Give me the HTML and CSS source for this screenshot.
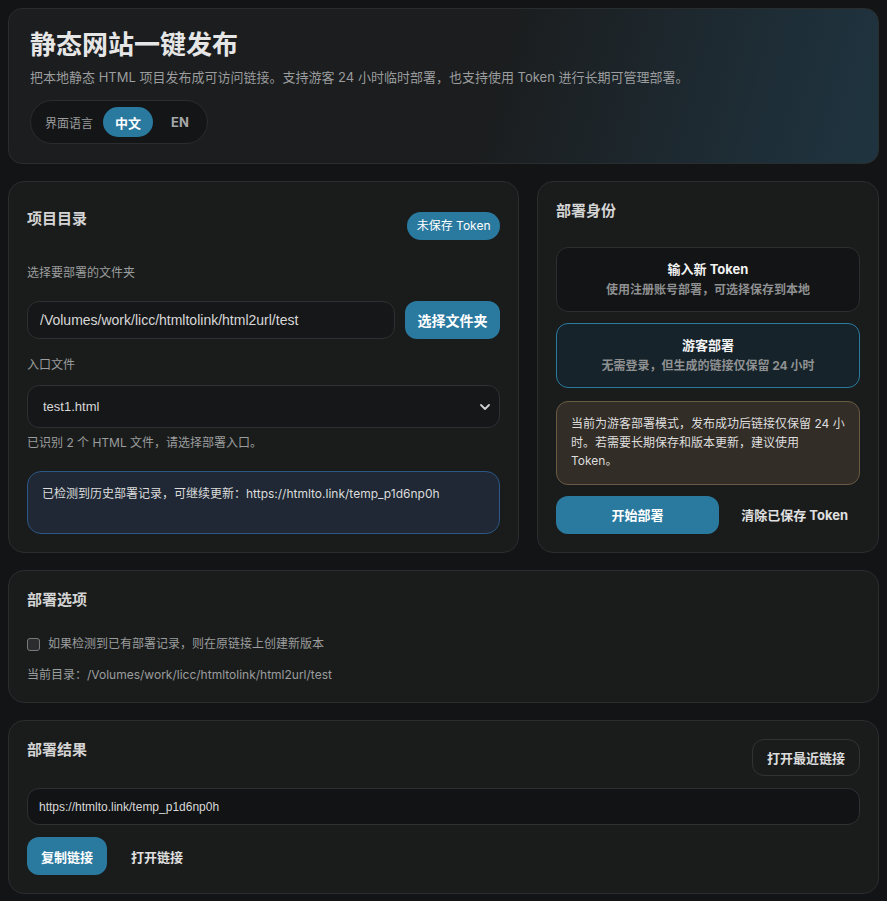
FILE: index.html
```html
<!DOCTYPE html>
<html lang="zh-CN">
<head>
    <meta charset="UTF-8">
    <meta name="viewport" content="width=device-width, initial-scale=1.0">
    <title>静态网站一键发布</title>
    <link rel="stylesheet" href="styles.css">
</head>
<body>
    <div class="page">
        <header class="hero">
            <h1>静态网站一键发布</h1>
            <p class="hero-sub">把本地静态 HTML 项目发布成可访问链接。支持游客 24 小时临时部署，也支持使用 Token 进行长期可管理部署。</p>
            <div class="lang-switch">
                <span class="lang-label">界面语言</span>
                <button class="lang-btn active">中文</button>
                <button class="lang-btn">EN</button>
            </div>
        </header>

        <div class="main-grid">
            <section class="card">
                <div class="card-head dir-head">
                    <h2>项目目录</h2>
                    <span class="badge">未保存 Token</span>
                </div>
                <label class="field-label first">选择要部署的文件夹</label>
                <div class="path-row">
                    <input class="text-input" type="text" value="/Volumes/work/licc/htmltolink/html2url/test">
                    <button class="btn primary">选择文件夹</button>
                </div>
                <label class="field-label">入口文件</label>
                <select class="select-input">
                    <option>test1.html</option>
                    <option>test2.html</option>
                </select>
                <p class="hint">已识别 2 个 HTML 文件，请选择部署入口。</p>
                <div class="info-box">已检测到历史部署记录，可继续更新：https://htmlto.link/temp_p1d6np0h</div>
            </section>

            <section class="card">
                <div class="card-head">
                    <h2>部署身份</h2>
                </div>
                <div class="mode-list">
                    <div class="mode-option">
                        <div class="mode-title">输入新 Token</div>
                        <div class="mode-desc">使用注册账号部署，可选择保存到本地</div>
                    </div>
                    <div class="mode-option selected">
                        <div class="mode-title">游客部署</div>
                        <div class="mode-desc">无需登录，但生成的链接仅保留 24 小时</div>
                    </div>
                </div>
                <div class="warn-box">当前为游客部署模式，发布成功后链接仅保留 24 小时。若需要长期保存和版本更新，建议使用 Token。</div>
                <div class="action-row">
                    <button class="btn primary grow">开始部署</button>
                    <button class="btn ghost">清除已保存 Token</button>
                </div>
            </section>
        </div>

        <section class="card">
            <div class="card-head">
                <h2>部署选项</h2>
            </div>
            <label class="check-row">
                <input type="checkbox" class="check">
                <span>如果检测到已有部署记录，则在原链接上创建新版本</span>
            </label>
            <p class="current-dir">当前目录：/Volumes/work/licc/htmltolink/html2url/test</p>
        </section>

        <section class="card">
            <div class="card-head">
                <h2>部署结果</h2>
                <button class="btn outline">打开最近链接</button>
            </div>
            <input class="text-input result-input" type="text" value="https://htmlto.link/temp_p1d6np0h" readonly>
            <div class="result-actions">
                <button class="btn primary small">复制链接</button>
                <button class="btn ghost small">打开链接</button>
            </div>
        </section>
    </div>
</body>
</html>
```

FILE: styles.css
```css
* {
    margin: 0;
    padding: 0;
    box-sizing: border-box;
}

:root {
    --bg: #121415;
    --card: #1a1c1c;
    --border: #2a2d2e;
    --blue: #2a7aa0;
    --text: #e4e4e4;
    --muted: #9a9c9d;
    --ui-font: Inter, "Noto Sans CJK SC", sans-serif;
    --field-font: "Liberation Sans", "Noto Sans CJK SC", sans-serif;
}

body {
    background: var(--bg);
    color: var(--text);
    font-family: var(--ui-font);
    padding: 8px;
}

.page {
    display: flex;
    flex-direction: column;
    gap: 17px;
}

button {
    font-family: var(--ui-font);
    cursor: pointer;
}

/* header */
.hero {
    border: 1px solid var(--border);
    border-radius: 14px;
    padding: 20px 21px 19px;
    background: linear-gradient(105deg, #1b1d1e 0%, #1b1d1e 55%, #1e2d36 85%, #1f3440 100%);
}

.hero h1 {
    font-size: 26px;
    line-height: 32px;
    font-weight: 700;
    color: #e6e6e6;
    margin-bottom: 6px;
}

.hero-sub {
    font-size: 13px;
    line-height: 20px;
    color: var(--muted);
    margin-bottom: 13px;
}

.lang-switch {
    display: inline-flex;
    align-items: center;
    gap: 6px;
    padding: 6px 6px 6px 14px;
    background: #141516;
    border: 1px solid #2a2c2d;
    border-radius: 22px;
}

.lang-label {
    font-size: 12px;
    color: var(--muted);
    margin-right: 4px;
}

.lang-btn {
    height: 30px;
    padding: 0 12px;
    border: none;
    border-radius: 15px;
    background: transparent;
    color: #a5a7a8;
    font-size: 13px;
    font-weight: 700;
}

.lang-btn.active {
    background: var(--blue);
    color: #fff;
}

/* cards */
.main-grid {
    display: grid;
    grid-template-columns: 511px 1fr;
    gap: 18px;
}

.card {
    background: var(--card);
    border: 1px solid var(--border);
    border-radius: 16px;
    padding: 18px;
}

.card-head {
    display: flex;
    justify-content: space-between;
    align-items: flex-start;
}

.card-head h2 {
    font-size: 15px;
    line-height: 22px;
    font-weight: 700;
    color: #d4d4d4;
}

.dir-head {
    padding-top: 8px;
}

.badge {
    margin-top: 4px;
    height: 28px;
    line-height: 28px;
    padding: 0 9.5px;
    border-radius: 14px;
    background: var(--blue);
    color: #fff;
    font-size: 12px;
}

.field-label {
    display: block;
    font-size: 12px;
    line-height: 18px;
    color: var(--muted);
    margin: 17px 0 11px;
}

.field-label.first {
    margin: 24px 0 19px;
}

.path-row {
    display: flex;
    gap: 10px;
}

.text-input,
.select-input {
    width: 100%;
    height: 38px;
    background: #161718;
    border: 1px solid #2e3031;
    border-radius: 12px;
    color: #d8d8d8;
    font-family: var(--field-font);
    font-size: 14px;
    padding: 0 12px;
    outline: none;
}

.select-input {
    height: 43px;
    font-size: 13px;
    padding: 0 15px;
    appearance: none;
    background-image: url("data:image/svg+xml;utf8,<svg xmlns='http://www.w3.org/2000/svg' width='10' height='6' viewBox='0 0 10 6'><path d='M1 1l4 4 4-4' fill='none' stroke='%23d0d0d0' stroke-width='1.8' stroke-linecap='round' stroke-linejoin='round'/></svg>");
    background-repeat: no-repeat;
    background-position: right 9px center;
}

.btn {
    height: 38px;
    border: none;
    border-radius: 12px;
    font-size: 13px;
    font-weight: 700;
    white-space: nowrap;
}

.btn.primary {
    background: var(--blue);
    color: #fff;
}

.path-row .btn {
    font-size: 14px;
    padding: 0 12.5px;
}

.btn.ghost {
    background: transparent;
    color: #e0e0e0;
    padding: 0 12px;
}

.btn.outline {
    height: 37px;
    background: transparent;
    border: 1px solid #303334;
    color: #dcdcdc;
    padding: 0 14px;
}

.hint {
    font-size: 12px;
    line-height: 18px;
    color: var(--muted);
    margin-top: 6px;
}

.info-box {
    margin-top: 19px;
    min-height: 63px;
    padding: 13px 14px;
    background: #1f2834;
    border: 1px solid #2c5786;
    border-radius: 14px;
    font-size: 12px;
    line-height: 18px;
    color: #dcdcdc;
}

/* identity */
.mode-list {
    display: flex;
    flex-direction: column;
    gap: 11px;
    margin-top: 25px;
}

.mode-option {
    padding: 12px 10px;
    background: #131415;
    border: 1px solid #2c2e2f;
    border-radius: 12px;
    text-align: center;
}

.mode-option.selected {
    background: #16232a;
    border-color: var(--blue);
}

.mode-title {
    font-size: 13px;
    line-height: 18px;
    font-weight: 700;
    color: #f2f2f2;
    margin-bottom: 3px;
}

.mode-desc {
    font-size: 12px;
    line-height: 18px;
    font-weight: 700;
    color: #8e9091;
}

.warn-box {
    margin-top: 13px;
    padding: 13px 14px;
    background: #322d27;
    border: 1px solid #6a5a42;
    border-radius: 12px;
    font-size: 12px;
    line-height: 18.5px;
    color: #dedede;
}

.action-row {
    display: flex;
    gap: 10px;
    margin-top: 11px;
}

.btn.grow {
    flex: 1;
}

/* options */
.check-row {
    display: flex;
    align-items: center;
    gap: 8px;
    margin-top: 24px;
    font-size: 12px;
    line-height: 18px;
    color: var(--muted);
}

.check {
    appearance: none;
    width: 13px;
    height: 13px;
    border: 1px solid #77797a;
    border-radius: 3px;
    background: #2a2c2d;
}

.current-dir {
    margin-top: 13px;
    font-size: 12px;
    line-height: 18px;
    color: var(--muted);
}

/* result */
.result-input {
    margin-top: 12px;
    height: 37px;
    background: #121314;
    font-size: 12px;
    padding: 0 11px;
}

.result-actions {
    display: flex;
    gap: 10px;
    margin-top: 12px;
}

.btn.small {
    padding: 0 14px;
}
```
